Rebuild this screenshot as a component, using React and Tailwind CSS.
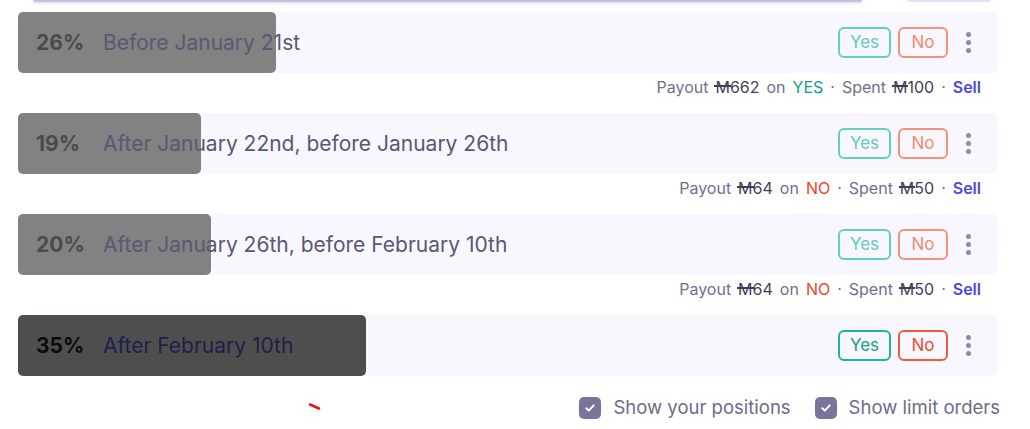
import React from "react";

const rows = [
  { pct: 26, bar: 258, label: "Before January 21st", payout: "662", side: "YES", spent: "100" },
  { pct: 19, bar: 183, label: "After January 22nd, before January 26th", payout: "64", side: "NO", spent: "50" },
  { pct: 20, bar: 193, label: "After January 26th, before February 10th", payout: "64", side: "NO", spent: "50" },
  { pct: 35, bar: 348, label: "After February 10th", top: true },
];

function Mana({ amount }) {
  return (
    <span className="text-[#3f3e55]">
      <span className="relative inline-block">
        M
        <span className="absolute left-[-1px] right-[-1px] top-[8px] h-[1.5px] bg-[#3f3e55]" />
      </span>
      {amount}
    </span>
  );
}

function Dots() {
  return (
    <div className="flex w-[10px] flex-col items-center gap-[3px]">
      <span className="h-[5px] w-[5px] rounded-full bg-[#8d8ca6]" />
      <span className="h-[5px] w-[5px] rounded-full bg-[#8d8ca6]" />
      <span className="h-[5px] w-[5px] rounded-full bg-[#8d8ca6]" />
    </div>
  );
}

function Row({ r }) {
  return (
    <div className="relative flex h-[61px] items-center rounded-md bg-[#f8f7fd]">
      <div
        className={
          "absolute left-0 top-0 h-full rounded-[5px] " +
          (r.top ? "bg-[#4d4e4e]" : "bg-[#818281]")
        }
        style={{ width: r.bar + "px" }}
      />
      <div className="relative flex flex-1 items-center pl-[18px] pt-[1px]">
        <span
          className={
            "w-[67px] text-[21px] font-bold " + (r.top ? "text-[#0b0b0b]" : "text-[#4a4b4b]")
          }
        >
          {r.pct}%
        </span>
        <span className={"text-[21px] " + (r.top ? "text-[#211f49]" : "text-[#5a5873]")}>
          {r.label}
        </span>
      </div>
      <div className="relative flex items-center gap-[7px] pr-[25px]">
        <button
          className={
            "h-[31px] w-[53px] rounded-md border-2 text-[17px] " +
            (r.top
              ? "border-[#1db3a0] text-[#149e8b]"
              : "border-[#62d0c1] text-[#5ecbbc]")
          }
        >
          Yes
        </button>
        <button
          className={
            "h-[31px] w-[50px] rounded-md border-2 text-[17px] " +
            (r.top
              ? "border-[#ee5a3d] text-[#ea4f30]"
              : "border-[#f6927c] text-[#f28a72]")
          }
        >
          No
        </button>
        <div className="ml-[8px]">
          <Dots />
        </div>
      </div>
    </div>
  );
}

function Payout({ r }) {
  return (
    <div className="flex h-[40px] items-start justify-end pr-[17px] pt-[4px]">
      <div className="flex items-center gap-[7px] text-[16px] leading-[20px] text-[#717089]">
        <span>Payout</span>
        <Mana amount={r.payout} />
        <span>on</span>
        <span className={r.side === "YES" ? "text-[#11a088]" : "text-[#f0422b]"}>{r.side}</span>
        <span>·</span>
        <span>Spent</span>
        <Mana amount={r.spent} />
        <span>·</span>
        <span className="font-semibold text-[#4f46e5]">Sell</span>
      </div>
    </div>
  );
}

function Check({ label }) {
  return (
    <label className="flex items-center gap-[12px]">
      <span className="flex h-[22px] w-[22px] items-center justify-center rounded-[5px] bg-[#77759a]">
        <svg width="12" height="12" viewBox="0 0 12 12">
          <path d="M2.3 6.3 L4.8 8.6 L9.7 3.4" fill="none" stroke="white" strokeWidth="2" strokeLinecap="round" strokeLinejoin="round" />
        </svg>
      </span>
      <span className="text-[18.5px] text-[#6d6c87]">{label}</span>
    </label>
  );
}

export default function App() {
  return (
    <div className="relative h-[429px] w-[1030px] overflow-hidden bg-white" style={{ fontFamily: "Inter, 'Noto Sans', sans-serif" }}>
      <div className="flex h-[3px] gap-[45px] px-[33px]">
        <div className="h-[2px] w-[829px] rounded-b bg-[#c5c1df] shadow-[0_1px_3px_rgba(120,110,200,0.35)]" />
        <div className="h-[2px] w-[84px] rounded-b bg-[#e3e1f5]" />
      </div>
      <div className="px-[18px] pr-[32px] pt-[9px]">
        {rows.map((r, i) => (
          <div key={i}>
            <Row r={r} />
            {r.payout && <Payout r={r} />}
          </div>
        ))}
        <div className="mr-[-2px] mt-[18px] flex items-center justify-end gap-[24px]">
          <Check label="Show your positions" />
          <Check label="Show limit orders" />
        </div>
      </div>
      <svg className="absolute left-[308px] top-[402px]" width="14" height="9" viewBox="0 0 14 9">
        <path d="M2 2.5 L11 6.5" stroke="#e8141b" strokeWidth="2.6" strokeLinecap="round" />
      </svg>
    </div>
  );
}
